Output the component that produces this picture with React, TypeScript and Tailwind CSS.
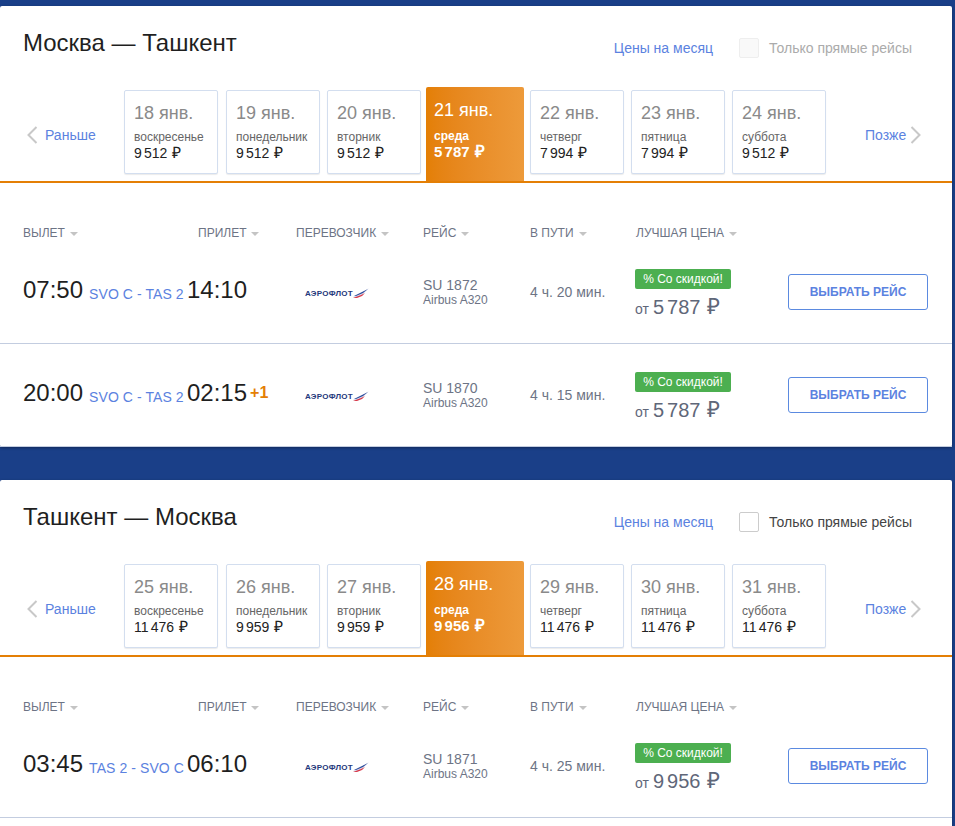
const days1 = [
  { date: '18 янв.', day: 'воскресенье', price: '9 512' },
  { date: '19 янв.', day: 'понедельник', price: '9 512' },
  { date: '20 янв.', day: 'вторник', price: '9 512' },
  { date: '21 янв.', day: 'среда', price: '5 787', active: true },
  { date: '22 янв.', day: 'четверг', price: '7 994' },
  { date: '23 янв.', day: 'пятница', price: '7 994' },
  { date: '24 янв.', day: 'суббота', price: '9 512' },
]

const days2 = [
  { date: '25 янв.', day: 'воскресенье', price: '11 476' },
  { date: '26 янв.', day: 'понедельник', price: '9 959' },
  { date: '27 янв.', day: 'вторник', price: '9 959' },
  { date: '28 янв.', day: 'среда', price: '9 956', active: true },
  { date: '29 янв.', day: 'четверг', price: '11 476' },
  { date: '30 янв.', day: 'пятница', price: '11 476' },
  { date: '31 янв.', day: 'суббота', price: '11 476' },
]

const flights1 = [
  { dep: '07:50', route: 'SVO C - TAS 2', arr: '14:10', no: 'SU 1872', time: '4 ч. 20 мин.', price: '5 787' },
  { dep: '20:00', route: 'SVO C - TAS 2', arr: '02:15', plus: true, no: 'SU 1870', time: '4 ч. 15 мин.', price: '5 787' },
]

const flights2 = [
  { dep: '03:45', route: 'TAS 2 - SVO C', arr: '06:10', no: 'SU 1871', time: '4 ч. 25 мин.', price: '9 956' },
]

function Chevron({ right = false }: { right?: boolean }) {
  return (
    <svg width="11" height="18" viewBox="0 0 11 18" fill="none" stroke="#c8c8c8" strokeWidth="2">
      <path d={right ? 'M1.5 1l8 8-8 8' : 'M9.5 1l-8 8 8 8'} />
    </svg>
  )
}

function Caret() {
  return <span className="ml-[5px] inline-block border-x-[4px] border-t-[4px] border-x-transparent border-t-[#c4c4c4] align-middle" />
}

function Head({ label, className }: { label: string; className: string }) {
  return (
    <div className={`${className} text-[12px] text-[#6d7485]`}>
      {label}
      <Caret />
    </div>
  )
}

// тонкий пробел между тысячами, как в оригинале
function Price({ value }: { value: string }) {
  const [a, b] = value.split(' ')
  return (
    <span className="whitespace-nowrap">
      {a}
      <span className="ml-[0.15em]">{b}</span>
      <span className="ml-[0.3em] text-[1.12em] leading-none">₽</span>
    </span>
  )
}

function Logo() {
  return (
    <div className="flex items-center pl-[9px] pt-[4px]">
      <span className="text-[8px] font-bold leading-none tracking-[0.25px] text-[#24397c]">АЭРОФЛОТ</span>
      <svg width="17" height="10" viewBox="0 0 17 10" className="-mt-[2px]">
        <path d="M0 9L8 5 16 0 10 6 3 10z" fill="#d8dcec" />
        <path d="M1 8L9 4l6-3-5 4-7 3z" fill="#2b4a9a" />
        <path d="M0 10l8-3 4-2-3 3-5 2z" fill="#d8394a" />
      </svg>
    </div>
  )
}

function DayTile({ date, day, price, active }: { date: string; day: string; price: string; active?: boolean }) {
  if (active) {
    return (
      <div className="-ml-[2px] -mr-[1px] h-[94px] w-[98px] rounded-t-[2px] bg-gradient-to-r from-[#e47f05] to-[#ed9a3a] pl-[8px] pt-[13px] text-white">
        <div className="text-[18px] leading-[20px]">{date}</div>
        <div className="mt-[9px] text-[12px] font-bold leading-[15px]">{day}</div>
        <div className="text-[15px] font-bold leading-[16px]">
          <Price value={price} />
        </div>
      </div>
    )
  }
  return (
    <div className="mt-[3px] h-[84px] w-[94px] rounded-[2px] border border-[#d3deef] bg-white pl-[9px] pt-[12px] shadow-[0_1px_1px_rgba(0,0,0,0.08)] first:mr-[1px]">
      <div className="text-[18px] leading-[20px] text-[#8a8a8a]">{date}</div>
      <div className="mt-[7px] text-[12px] leading-[15px] text-[#666]">{day}</div>
      <div className="text-[14px] leading-[15px] text-[#222]">
        <Price value={price} />
      </div>
    </div>
  )
}

type Flight = { dep: string; route: string; arr: string; plus?: boolean; no: string; time: string; price: string }

function FlightRow({ f }: { f: Flight }) {
  return (
    <div className="flex h-[103px] items-center border-b border-[#c3cde0] pl-[23px]">
      <div className="flex w-[164px] items-baseline whitespace-nowrap pb-[4px]">
        <span className="text-[24px] text-[#1f1f1f]">{f.dep}</span>
        <span className="ml-[6px] translate-y-px text-[14px] tracking-[0.08px] text-[#5b82e0]">{f.route}</span>
      </div>
      <div className="flex w-[109px] items-center whitespace-nowrap pb-[4px]">
        <span className="text-[24px] text-[#1f1f1f]">{f.arr}</span>
        {f.plus && <span className="ml-[3px] text-[16px] font-bold text-[#e47f05]">+1</span>}
      </div>
      <div className="w-[127px]">
        <Logo />
      </div>
      <div className="w-[107px] text-[#6d7485]">
        <div className="text-[14px] leading-[15px]">{f.no}</div>
        <div className="text-[12px] leading-[14px]">Airbus A320</div>
      </div>
      <div className="w-[105px] text-[14px] text-[#6d7485]">{f.time}</div>
      <div className="w-[153px] pt-[6px]">
        <div className="w-[96px] rounded-[2px] bg-[#4caf50] text-center text-[12px] leading-[20px] text-white">% Со скидкой!</div>
        <div className="mt-[4px] flex items-baseline text-[#5f6779]">
          <span className="text-[14px]">от</span>
          <span className="ml-[4px] text-[20px] leading-[28px]">
            <Price value={f.price} />
          </span>
        </div>
      </div>
      <button className="h-[36px] w-[140px] rounded-[3px] border border-[#5b8ae0] bg-white text-[12px] font-bold text-[#5b82e0]">ВЫБРАТЬ РЕЙС</button>
    </div>
  )
}

function Direction({ title, days, flights, dim, tail }: { title: string; days: typeof days1; flights: Flight[]; dim?: boolean; tail?: boolean }) {
  return (
    <section className="mr-[3px] rounded-[2px] bg-white shadow-[0_1px_3px_rgba(0,0,0,0.35)]">
      <div className="flex h-[81px] items-start pl-[23px] pr-[40px]">
        <h2 className="mt-[22px] text-[24px] leading-[30px] text-[#1f1f1f]">{title}</h2>
        <a className="ml-auto mt-[33px] text-[14px] leading-[18px] text-[#5b82e0]">Цены на месяц</a>
        <div className={`ml-[26px] mt-[32px] h-[20px] w-[20px] rounded-[2px] border ${dim ? 'border-[#eeeeee] bg-[#f9f9f9]' : 'border-[#cccccc] bg-white'}`} />
        <span className={`ml-[10px] mt-[33px] text-[14px] leading-[18px] ${dim ? 'text-[#ababab]' : 'text-[#444]'}`}>Только прямые рейсы</span>
      </div>
      <div className="flex h-[96px] border-b-2 border-[#e47f05]">
        <div className="flex h-[94px] w-[124px] items-center pb-[1px] pl-[27px] pt-[3px]">
          <Chevron />
          <span className="ml-[7px] text-[14px] text-[#5b82e0]">Раньше</span>
        </div>
        <div className="flex gap-[7px]">
          {days.map((d) => (
            <DayTile key={d.date} {...d} />
          ))}
        </div>
        <div className="flex h-[94px] items-center pb-[1px] pl-[39px] pt-[3px]">
          <span className="mr-[4px] text-[14px] text-[#5b82e0]">Позже</span>
          <Chevron right />
        </div>
      </div>
      <div className="flex h-[58px] items-start pl-[23px] pt-[43px] leading-[14px]">
        <Head label="ВЫЛЕТ" className="w-[175px]" />
        <Head label="ПРИЛЕТ" className="w-[98px]" />
        <Head label="ПЕРЕВОЗЧИК" className="w-[127px]" />
        <Head label="РЕЙС" className="w-[107px]" />
        <Head label="В ПУТИ" className="w-[106px]" />
        <Head label="ЛУЧШАЯ ЦЕНА" className="w-[153px]" />
      </div>
      {flights.map((f) => (
        <FlightRow key={f.no} f={f} />
      ))}
      {tail && <div className="h-[20px]" />}
    </section>
  )
}

export default function App() {
  return (
    <div className="h-[826px] overflow-hidden bg-[#1a3f88] pt-[6px] font-['Liberation_Sans',Arial,sans-serif]">
      <Direction title="Москва — Ташкент" days={days1} flights={flights1} dim />
      <div className="h-[33px]" />
      <Direction title="Ташкент — Москва" days={days2} flights={flights2} tail />
    </div>
  )
}
